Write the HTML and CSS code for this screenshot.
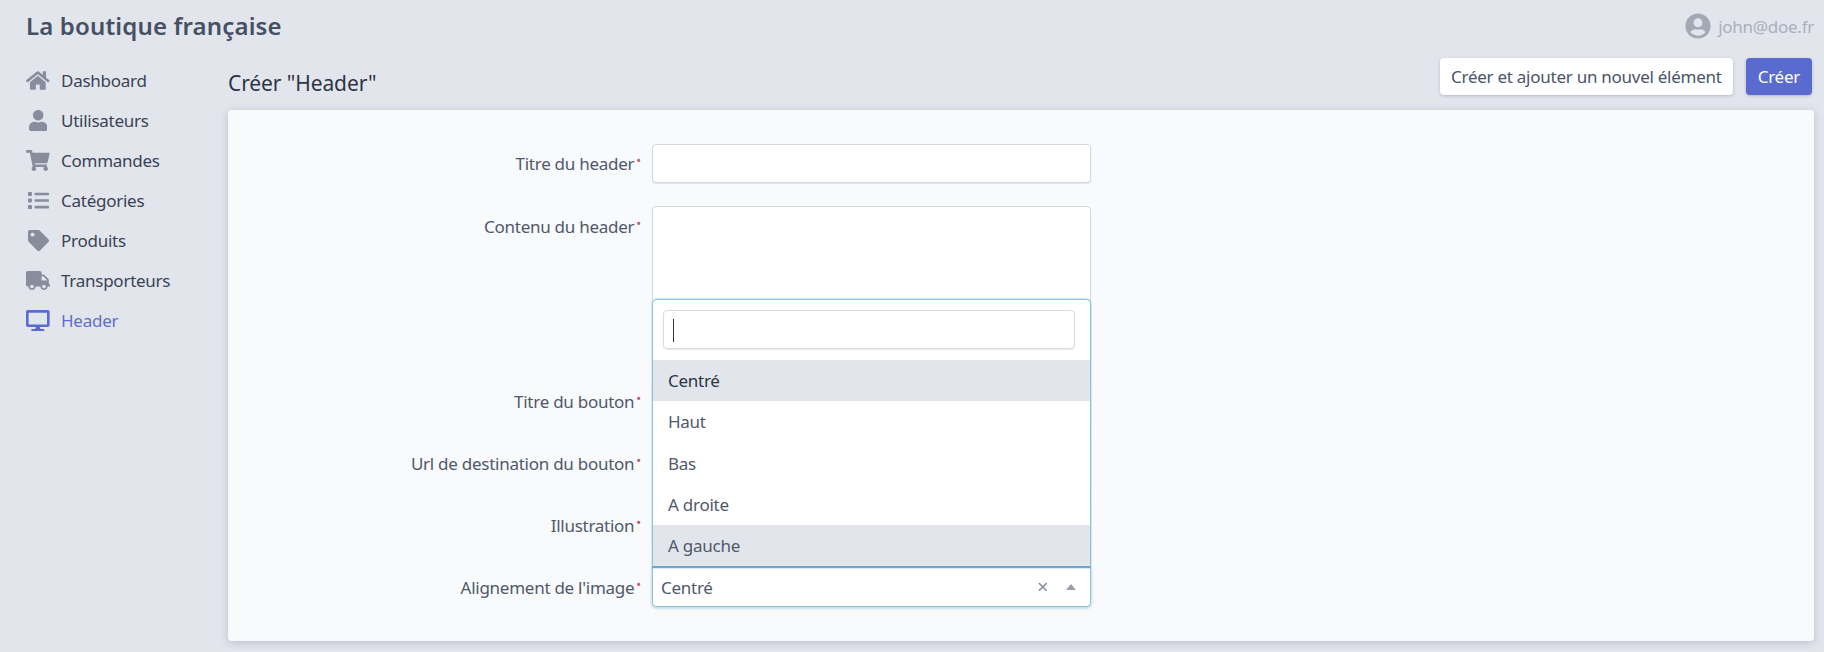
FILE: index.html
```html
<!DOCTYPE html>
<html lang="fr">
<head>
  <meta charset="UTF-8" />
  <title>La boutique française</title>
  <link rel="stylesheet" href="styles.css">
</head>
<body>
  <header class="topbar">
    <div class="brand">La boutique française</div>
    <div class="user">
      <svg class="user-icon" viewBox="0 0 496 512"><path d="M248 8C111 8 0 119 0 256s111 248 248 248 248-111 248-248S385 8 248 8zm0 96c48.6 0 88 39.4 88 88s-39.4 88-88 88-88-39.4-88-88 39.4-88 88-88zm0 344c-58.7 0-111.3-26.6-146.5-68.2 18.8-35.4 55.6-59.8 98.5-59.8 2.4 0 4.8.4 7.1 1.1 13 4.2 26.6 6.9 40.9 6.9 14.3 0 28-2.7 40.9-6.9 2.3-.7 4.7-1.1 7.1-1.1 42.9 0 79.7 24.4 98.5 59.8C359.3 421.4 306.7 448 248 448z"/></svg>
      <span>john@doe.fr</span>
    </div>
  </header>

  <div class="layout">
    <nav class="sidebar">
      <a class="menu-item">
        <span class="menu-icon"><svg viewBox="0 0 576 512"><path d="M280.37 148.26L96 300.11V464a16 16 0 0 0 16 16l112.06-.29a16 16 0 0 0 15.92-16V368a16 16 0 0 1 16-16h64a16 16 0 0 1 16 16v95.64a16 16 0 0 0 16 16.05L464 480a16 16 0 0 0 16-16V300L295.67 148.26a12.19 12.19 0 0 0-15.3 0zM571.6 251.47L488 182.56V44.05a12 12 0 0 0-12-12h-56a12 12 0 0 0-12 12v72.61L318.47 43a48 48 0 0 0-61 0L4.34 251.47a12 12 0 0 0-1.6 16.9l25.5 31A12 12 0 0 0 45.15 301l235.22-193.74a12.19 12.19 0 0 1 15.3 0L530.9 301a12 12 0 0 0 16.9-1.6l25.5-31a12 12 0 0 0-1.7-16.93z"/></svg></span>
        Dashboard
      </a>
      <a class="menu-item">
        <span class="menu-icon"><svg viewBox="0 0 448 512"><path d="M224 256c70.7 0 128-57.3 128-128S294.7 0 224 0 96 57.3 96 128s57.3 128 128 128zm89.6 32h-16.7c-22.2 10.2-46.9 16-72.9 16s-50.6-5.8-72.9-16h-16.7C60.2 288 0 348.2 0 422.4V464c0 26.5 21.5 48 48 48h352c26.5 0 48-21.5 48-48v-41.6c0-74.2-60.2-134.4-134.4-134.4z"/></svg></span>
        Utilisateurs
      </a>
      <a class="menu-item">
        <span class="menu-icon"><svg viewBox="0 0 576 512"><path d="M528.12 301.319l47.273-208C578.806 78.301 567.391 64 551.99 64H159.208l-9.166-44.81C147.758 8.021 137.93 0 126.529 0H24C10.745 0 0 10.745 0 24v16c0 13.255 10.745 24 24 24h69.883l70.248 343.435C147.325 417.1 136 435.222 136 456c0 30.928 25.072 56 56 56s56-25.072 56-56c0-15.674-6.447-29.835-16.824-40h209.647C430.447 426.165 424 440.326 424 456c0 30.928 25.072 56 56 56s56-25.072 56-56c0-22.172-12.888-41.332-31.579-50.405l5.517-24.276c3.413-15.018-8.002-29.319-23.403-29.319H218.117l-6.545-32h293.145c11.206 0 20.92-7.754 23.403-18.681z"/></svg></span>
        Commandes
      </a>
      <a class="menu-item">
        <span class="menu-icon"><svg viewBox="0 0 512 512"><path d="M80 368H16a16 16 0 0 0-16 16v64a16 16 0 0 0 16 16h64a16 16 0 0 0 16-16v-64a16 16 0 0 0-16-16zm0-320H16A16 16 0 0 0 0 64v64a16 16 0 0 0 16 16h64a16 16 0 0 0 16-16V64a16 16 0 0 0-16-16zm0 160H16a16 16 0 0 0-16 16v64a16 16 0 0 0 16 16h64a16 16 0 0 0 16-16v-64a16 16 0 0 0-16-16zm416 176H176a16 16 0 0 0-16 16v32a16 16 0 0 0 16 16h320a16 16 0 0 0 16-16v-32a16 16 0 0 0-16-16zm0-320H176a16 16 0 0 0-16 16v32a16 16 0 0 0 16 16h320a16 16 0 0 0 16-16V80a16 16 0 0 0-16-16zm0 160H176a16 16 0 0 0-16 16v32a16 16 0 0 0 16 16h320a16 16 0 0 0 16-16v-32a16 16 0 0 0-16-16z"/></svg></span>
        Catégories
      </a>
      <a class="menu-item">
        <span class="menu-icon"><svg viewBox="0 0 512 512"><path d="M0 252.118V48C0 21.49 21.49 0 48 0h204.118a48 48 0 0 1 33.941 14.059l211.882 211.882c18.745 18.745 18.745 49.137 0 67.882L293.823 497.941c-18.745 18.745-49.137 18.745-67.882 0L14.059 286.059A48 48 0 0 1 0 252.118zM112 64c-26.51 0-48 21.49-48 48s21.49 48 48 48 48-21.49 48-48-21.49-48-48-48z"/></svg></span>
        Produits
      </a>
      <a class="menu-item">
        <span class="menu-icon"><svg viewBox="0 0 640 512"><path d="M624 352h-16V243.9c0-12.7-5.1-24.9-14.1-33.9L494 110.1c-9-9-21.2-14.1-33.9-14.1H416V48c0-26.5-21.5-48-48-48H48C21.5 0 0 21.5 0 48v320c0 26.5 21.5 48 48 48h16c0 53 43 96 96 96s96-43 96-96h128c0 53 43 96 96 96s96-43 96-96h48c8.8 0 16-7.2 16-16v-32c0-8.8-7.2-16-16-16zM160 464c-26.5 0-48-21.5-48-48s21.5-48 48-48 48 21.5 48 48-21.5 48-48 48zm320 0c-26.5 0-48-21.5-48-48s21.5-48 48-48 48 21.5 48 48-21.5 48-48 48zm80-208H416V144h44.1l99.9 99.9V256z"/></svg></span>
        Transporteurs
      </a>
      <a class="menu-item active">
        <span class="menu-icon"><svg viewBox="0 0 576 512"><path d="M528 0H48C21.5 0 0 21.5 0 48v320c0 26.5 21.5 48 48 48h192l-16 48h-72c-13.3 0-24 10.7-24 24s10.7 24 24 24h272c13.3 0 24-10.7 24-24s-10.7-24-24-24h-72l-16-48h192c26.5 0 48-21.5 48-48V48c0-26.5-21.5-48-48-48zm-16 352H64V64h448v288z"/></svg></span>
        Header
      </a>
    </nav>

    <main class="content">
      <div class="content-head">
        <h1 class="page-title">Créer "Header"</h1>
        <div class="actions">
          <button class="btn">Créer et ajouter un nouvel élément</button>
          <button class="btn btn-primary">Créer</button>
        </div>
      </div>

      <form class="card">
        <label class="field-label">Titre du header</label>
        <input class="field-input" type="text" />

        <label class="field-label tall">Contenu du header</label>
        <textarea class="field-input field-textarea"></textarea>

        <label class="field-label">Titre du bouton</label>
        <input class="field-input" type="text" />

        <label class="field-label">Url de destination du bouton</label>
        <input class="field-input" type="text" />

        <label class="field-label">Illustration</label>
        <input class="field-input" type="text" />

        <label class="field-label">Alignement de l'image</label>
        <div class="select">
          <div class="dropdown">
            <div class="search-wrap">
              <div class="search"><span class="caret"></span></div>
            </div>
            <div class="option shaded dark">Centré</div>
            <div class="option">Haut</div>
            <div class="option">Bas</div>
            <div class="option">A droite</div>
            <div class="option shaded">A gauche</div>
          </div>
          <span class="select-value">Centré</span>
          <span class="select-clear">×</span>
          <span class="select-arrow"></span>
        </div>
      </form>
    </main>
  </div>
</body>
</html>
```

FILE: styles.css
```css
* { box-sizing: border-box; }
body { margin: 0; height: 652px; overflow: hidden; background: #e2e5ec; color: #4a5568; font-family: "Noto Sans", sans-serif; font-size: 17px; letter-spacing: -0.26px; }

.topbar { height: 52px; display: flex; align-items: center; justify-content: space-between; padding: 0 10px 2px 26px; }
.brand { font-size: 24px; font-weight: 600; color: #465064; letter-spacing: 0.15px; }
.user { display: flex; align-items: center; gap: 7px; margin-top: 2px; color: #a9b0bb; font-size: 17px; }
.user-icon { width: 26px; height: 26px; fill: #a2a9b5; }

.layout { display: flex; }
.sidebar { width: 228px; flex-shrink: 0; padding: 8px 0 0 26px; }
.menu-item { display: flex; align-items: center; height: 40px; color: #3a4354; }
.menu-icon { width: 24px; margin-right: 11px; display: flex; justify-content: center; }
.menu-icon svg { height: 21px; fill: #878d9d; }
.menu-item.active { color: #5f6fcb; }
.menu-item.active svg { fill: #5a6bd0; }

.content { flex: 1; padding: 6px 10px 0 0; }
.content-head { display: flex; align-items: center; justify-content: space-between; height: 37px; margin-bottom: 15px; }
.page-title { margin: 13px 0 0 0; font-size: 21px; font-weight: 400; color: #2d3544; letter-spacing: -0.1px; }
.actions { display: flex; gap: 13px; padding-right: 2px; }
.btn { height: 37px; padding: 0 11px; border: 0; border-radius: 4px; background: #fff; color: #4a5568; font: inherit; letter-spacing: inherit; box-shadow: 0 1px 3px rgba(50, 50, 93, .25); }
.btn-primary { padding: 0 12px; background: #5a6bcf; color: #fff; }

.card { display: grid; grid-template-columns: 413px 439px; column-gap: 11px; row-gap: 23px; padding: 34px 0; height: 531px; background: #f9fafc; border-radius: 4px; box-shadow: 0 2px 8px rgba(50, 50, 93, .2); }
.field-label { padding-top: 8px; text-align: right; color: #4f596b; }
.field-label.tall { padding-top: 9px; }
.field-label::after { content: "•"; margin-left: 2px; color: #c0567f; font-size: 13px; line-height: 0; vertical-align: 5px; }
.field-input { display: block; width: 100%; height: 39px; padding: 0 9px; border: 1px solid #d3d7de; border-radius: 4px; background: #fff; box-shadow: 0 1px 1px rgba(50, 50, 93, .1); resize: none; }
.field-textarea { height: 153px; }

.select { position: relative; height: 39px; display: flex; align-items: center; padding: 0 5px 0 8px; background: #fff; border: 1px solid #8cc5da; border-top: 0; border-radius: 0 0 5px 5px; box-shadow: 0 1px 2px 1px rgba(120, 180, 205, .4); }
.select-value { flex: 1; color: #4f596b; }
.select-clear { width: 29px; color: #8a8f99; font-size: 20px; line-height: 1; }
.select-arrow { width: 0; height: 0; margin-right: 9px; border: 5px solid transparent; border-top: 0; border-bottom: 6px solid #9a9fa8; }

.dropdown { position: absolute; left: -1px; right: -1px; bottom: 100%; background: #fff; border: 1px solid #8cc5da; border-bottom: 2px solid #6fa6cd; border-radius: 5px 5px 0 0; box-shadow: 0 0 0 1px rgba(140, 197, 218, .35); }
.search-wrap { padding: 10px 15px 11px 10px; }
.search { height: 39px; padding: 8px 9px; border: 1px solid #d8dbe1; border-radius: 4px; box-shadow: 0 1px 1px rgba(50, 50, 93, .1); }
.caret { display: block; width: 1px; height: 23px; background: #333; }
.option { height: 41.2px; padding: 0 15px; display: flex; align-items: center; color: #4f596b; }
.option.shaded { background: #e2e5ec; }
.option.dark { color: #2d3544; }
```
